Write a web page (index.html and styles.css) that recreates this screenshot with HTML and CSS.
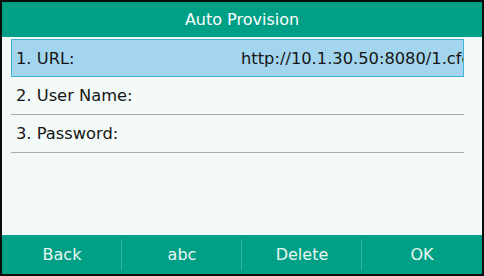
FILE: index.html
```html
<!DOCTYPE html>
<html lang="en">
<head>
  <meta charset="UTF-8" />
  <title>Auto Provision</title>
  <link rel="stylesheet" href="styles.css">
</head>
<body>
  <div class="screen">
    <header class="title-bar">Auto Provision</header>

    <div class="list">
      <div class="row selected">
        <span class="label">1. URL:</span>
        <span class="value">http://10.1.30.50:8080/1.cfg</span>
      </div>
      <div class="row">
        <span class="label">2. User Name:</span>
        <span class="value"></span>
      </div>
      <div class="row">
        <span class="label">3. Password:</span>
        <span class="value"></span>
      </div>
    </div>

    <footer class="softkeys">
      <button class="key">Back</button>
      <button class="key">abc</button>
      <button class="key">Delete</button>
      <button class="key">OK</button>
    </footer>
  </div>
</body>
</html>
```

FILE: styles.css
```css
* {
  margin: 0;
  padding: 0;
  box-sizing: border-box;
}

body {
  background: #0b0b0b;
  width: 484px;
  height: 276px;
  padding: 2px;
  font-family: 'DejaVu Sans', sans-serif;
}

.screen {
  width: 480px;
  height: 272px;
  background: #f3f9f6;
  display: flex;
  flex-direction: column;
}

.title-bar {
  height: 35px;
  background: #00a086;
  color: #ffffff;
  font-size: 16px;
  display: flex;
  align-items: center;
  justify-content: center;
}

.list {
  flex: 1;
  padding: 2px 18px 0 9px;
}

.row {
  height: 38px;
  display: flex;
  align-items: center;
  border-bottom: 1px solid #a9aead;
  font-size: 16.3px;
  color: #161616;
  padding-left: 5px;
}

.row.selected {
  background: #a4d5ef;
  border: 1px solid #41b1d6;
  padding-left: 4px;
}

.label {
  width: 225px;
  flex: none;
}

.value {
  flex: 1;
  overflow: hidden;
  white-space: nowrap;
}

.softkeys {
  height: 39px;
  background: #00a086;
  display: flex;
}

.key {
  flex: 1;
  background: none;
  border: none;
  color: #eaf7f2;
  font-family: inherit;
  font-size: 16px;
  position: relative;
}

.key + .key::before {
  content: "";
  position: absolute;
  left: -1px;
  top: 4px;
  bottom: 4px;
  width: 1px;
  background: #3fb39f;
}
```
